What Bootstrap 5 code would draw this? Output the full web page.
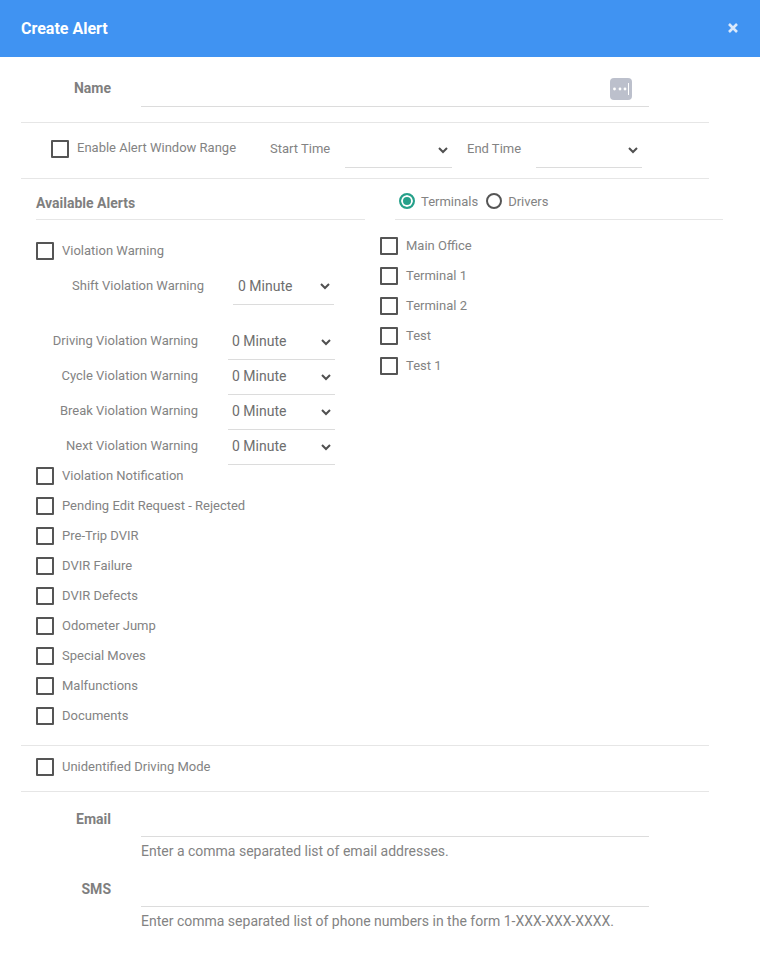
<!DOCTYPE html>
<html lang="en">

<head>
    <meta charset="UTF-8">
    <meta name="viewport" content="width=device-width, initial-scale=1.0">
    <title>Create Alert</title>
    <link href="https://cdn.jsdelivr.net/npm/bootstrap@5.3.0/dist/css/bootstrap.min.css" rel="stylesheet">
    <style>
        body {
            font-family: Roboto, "Liberation Sans", sans-serif;
            font-size: 13px;
            color: #838383;
            background: #fff;
        }

        .alert-head {
            height: 57px;
            padding: 0 21px;
            background: #4093f2;
            color: #fff;
        }

        .alert-head h1 {
            margin: 0;
            font-size: 16px;
            font-weight: 700;
        }

        .head-close {
            margin-right: 1px;
            margin-top: -1px;
        }

        .alert-body {
            width: 688px;
            margin-left: 21px;
        }

        .sect {
            border-bottom: 1px solid #e6e6e6;
        }

        .name-sect {
            height: 66px;
        }

        .field-label {
            width: 90px;
            margin-right: 30px;
            padding-top: 5px;
            text-align: right;
            font-size: 14px;
            font-weight: 700;
            color: #7f7f7f;
        }

        .name-label {
            padding-top: 21px;
        }

        .line-field {
            width: 508px;
            height: 33px;
            border-bottom: 1px solid #dcdcdc;
        }

        .name-field {
            margin-top: 17px;
        }

        .line-input {
            display: block;
            width: 100%;
            height: 100%;
            padding: 0;
            border: 0;
            outline: 0;
            background: transparent;
        }

        .key-btn {
            right: 17px;
            top: 4px;
            width: 22px;
            height: 22px;
            border-radius: 4px;
            background: #bcc0cc;
        }

        .chk {
            flex: none;
            width: 18px;
            height: 18px;
            margin: 0;
            border: 2px solid #555;
            border-radius: 1px;
            background: #fff;
            appearance: none;
        }

        .rad {
            flex: none;
            width: 16px;
            height: 16px;
            margin: 0;
            border: 2px solid #555;
            border-radius: 50%;
            background: #fff;
            appearance: none;
        }

        .rad:checked {
            border-color: #26a08a;
            background: #26a08a;
            box-shadow: inset 0 0 0 2px #fff;
        }

        .chk-row {
            height: 30px;
            gap: 8px;
        }

        .line-select {
            height: 35px;
            padding: 0 24px 0 0;
            border: 0;
            border-bottom: 1px solid #dcdcdc;
            border-radius: 0;
            font-size: 14px;
            color: #6e6e6e;
            background-color: #fff;
            background-image: url("data:image/svg+xml,%3csvg xmlns='http://www.w3.org/2000/svg' viewBox='0 0 10 7'%3e%3cpath fill='none' stroke='%23505050' stroke-width='2' d='M1 1l4 4 4-4'/%3e%3c/svg%3e");
            background-repeat: no-repeat;
            background-position: right 4px center;
            background-size: 10px 7px;
            appearance: none;
            outline: 0;
        }

        .range-row {
            height: 56px;
            padding-left: 30px;
        }

        .range-row .chk-row {
            width: 219px;
            margin-top: -4px;
        }

        .range-text {
            padding-bottom: 2px;
        }

        .time-label {
            width: 75px;
            padding-bottom: 4px;
        }

        .end-label {
            width: 69px;
            margin-left: 15px;
            padding-bottom: 4px;
        }

        .time-select {
            width: 107px;
            height: 39px;
            margin-bottom: 5px;
            background-position: right 4px top 18px;
        }

        .end-select {
            width: 106px;
        }

        .lists {
            height: 566px;
        }

        .left-col {
            width: 344px;
            padding-left: 15px;
        }

        .right-col {
            width: 344px;
        }

        .col-head {
            height: 41px;
            border-bottom: 1px solid #e6e6e6;
            width: 329px;
        }

        .col-head h2 {
            margin: 8px 0 0;
            font-size: 14px;
            font-weight: 700;
            color: #7f7f7f;
        }

        .radio-head {
            width: 328px;
            margin-left: 30px;
            padding-left: 4px;
            padding-top: 4px;
            gap: 6px;
        }

        .radio-head span {
            padding-top: 1px;
        }

        .radio-next {
            margin-left: 2px;
        }

        .first-check {
            margin-top: 16px;
        }

        .warn-row {
            height: 35px;
        }

        .warn-row label {
            width: 162px;
            text-align: right;
            margin-right: 30px;
            padding-bottom: 3px;
        }

        .warn-row .line-select {
            width: 107px;
            height: 35px;
            padding-left: 4px;
            padding-bottom: 2px;
        }

        .warn-first {
            height: 37px;
            margin-top: 2px;
            margin-bottom: 20px;
        }

        .warn-first label {
            width: 168px;
            margin-right: 29px;
            padding-bottom: 1px;
        }

        .warn-first .line-select {
            width: 101px;
            height: 37px;
            padding-left: 5px;
            padding-bottom: 0;
            background-position: right 4px top 15px;
        }

        #leftChecks {
            margin-top: -4px;
        }

        #rightChecks {
            margin-top: 11px;
            padding-left: 15px;
        }

        .mode-sect {
            height: 47px;
            padding-left: 15px;
            border-top: 1px solid #e6e6e6;
        }

        .mode-sect .chk-row {
            margin-top: 6px;
        }

        .contact-row {
            height: 70px;
        }

        .hint {
            margin: 0 0 0 120px;
            font-size: 14px;
            line-height: 16px;
            padding-top: 6px;
        }

        .contact-top {
            padding-top: 12px;
        }
    </style>
</head>

<body>
    <div class="alert-head d-flex align-items-center justify-content-between">
        <h1>Create Alert</h1>
        <svg class="head-close" width="10" height="10" viewBox="0 0 10 10" aria-label="Close">
            <path d="M1 1l8 8M9 1l-8 8" fill="none" stroke="#dbe9fb" stroke-width="2.6" />
        </svg>
    </div>

    <div class="alert-body">
        <div class="sect name-sect d-flex">
            <label class="field-label name-label">Name</label>
            <div class="line-field name-field position-relative">
                <input class="line-input" type="text">
                <span class="key-btn position-absolute d-flex align-items-center justify-content-center">
                    <svg width="18" height="12" viewBox="0 0 18 12">
                        <circle cx="2.5" cy="6" r="1.4" fill="#fff" />
                        <circle cx="8" cy="6" r="1.4" fill="#fff" />
                        <circle cx="13" cy="6" r="1.4" fill="#fff" />
                        <rect x="16" y="0" width="1" height="12" fill="#fff" />
                    </svg>
                </span>
            </div>
        </div>

        <div class="sect range-row d-flex align-items-center">
            <div class="chk-row d-flex align-items-center">
                <input class="chk" type="checkbox">
                <span class="range-text">Enable Alert Window Range</span>
            </div>
            <span class="time-label">Start Time</span>
            <select class="line-select time-select"><option></option></select>
            <span class="end-label">End Time</span>
            <select class="line-select time-select end-select"><option></option></select>
        </div>

        <div class="lists d-flex">
            <div class="left-col">
                <div class="col-head d-flex align-items-center">
                    <h2>Available Alerts</h2>
                </div>
                <div class="chk-row first-check d-flex align-items-center">
                    <input class="chk" type="checkbox"><span>Violation Warning</span>
                </div>
                <div class="warn-row warn-first d-flex align-items-center">
                    <label>Shift Violation Warning</label>
                    <select class="line-select"><option>0 Minute</option></select>
                </div>
                <div class="warn-row d-flex align-items-center">
                    <label>Driving Violation Warning</label>
                    <select class="line-select"><option>0 Minute</option></select>
                </div>
                <div class="warn-row d-flex align-items-center">
                    <label>Cycle Violation Warning</label>
                    <select class="line-select"><option>0 Minute</option></select>
                </div>
                <div class="warn-row d-flex align-items-center">
                    <label>Break Violation Warning</label>
                    <select class="line-select"><option>0 Minute</option></select>
                </div>
                <div class="warn-row d-flex align-items-center">
                    <label>Next Violation Warning</label>
                    <select class="line-select"><option>0 Minute</option></select>
                </div>
                <div id="leftChecks"></div>
            </div>
            <div class="right-col">
                <div class="col-head radio-head d-flex align-items-center">
                    <input class="rad" type="radio" name="scope" checked><span>Terminals</span>
                    <input class="rad radio-next" type="radio" name="scope"><span>Drivers</span>
                </div>
                <div id="rightChecks"></div>
            </div>
        </div>

        <div class="sect mode-sect">
            <div class="chk-row d-flex align-items-center">
                <input class="chk" type="checkbox"><span>Unidentified Driving Mode</span>
            </div>
        </div>

        <div class="contact-top">
            <div class="contact-row">
                <div class="d-flex">
                    <label class="field-label">Email</label>
                    <div class="line-field"><input class="line-input" type="text"></div>
                </div>
                <p class="hint">Enter a comma separated list of email addresses.</p>
            </div>
            <div class="contact-row">
                <div class="d-flex">
                    <label class="field-label">SMS</label>
                    <div class="line-field"><input class="line-input" type="text"></div>
                </div>
                <p class="hint">Enter comma separated list of phone numbers in the form 1-XXX-XXX-XXXX.</p>
            </div>
        </div>
    </div>

    <script src="https://cdn.jsdelivr.net/npm/bootstrap@5.3.0/dist/js/bootstrap.bundle.min.js"></script>
    <script>
        // Fill the two checkbox lists
        function renderChecks(id, names) {
            const box = document.getElementById(id);
            names.forEach(name => {
                const row = document.createElement('div');
                row.className = 'chk-row d-flex align-items-center';
                row.innerHTML = `<input class="chk" type="checkbox"><span>${name}</span>`;
                box.appendChild(row);
            });
        }

        renderChecks('leftChecks', ['Violation Notification', 'Pending Edit Request - Rejected', 'Pre-Trip DVIR',
            'DVIR Failure', 'DVIR Defects', 'Odometer Jump', 'Special Moves', 'Malfunctions', 'Documents']);
        renderChecks('rightChecks', ['Main Office', 'Terminal 1', 'Terminal 2', 'Test', 'Test 1']);
    </script>
</body>

</html>
